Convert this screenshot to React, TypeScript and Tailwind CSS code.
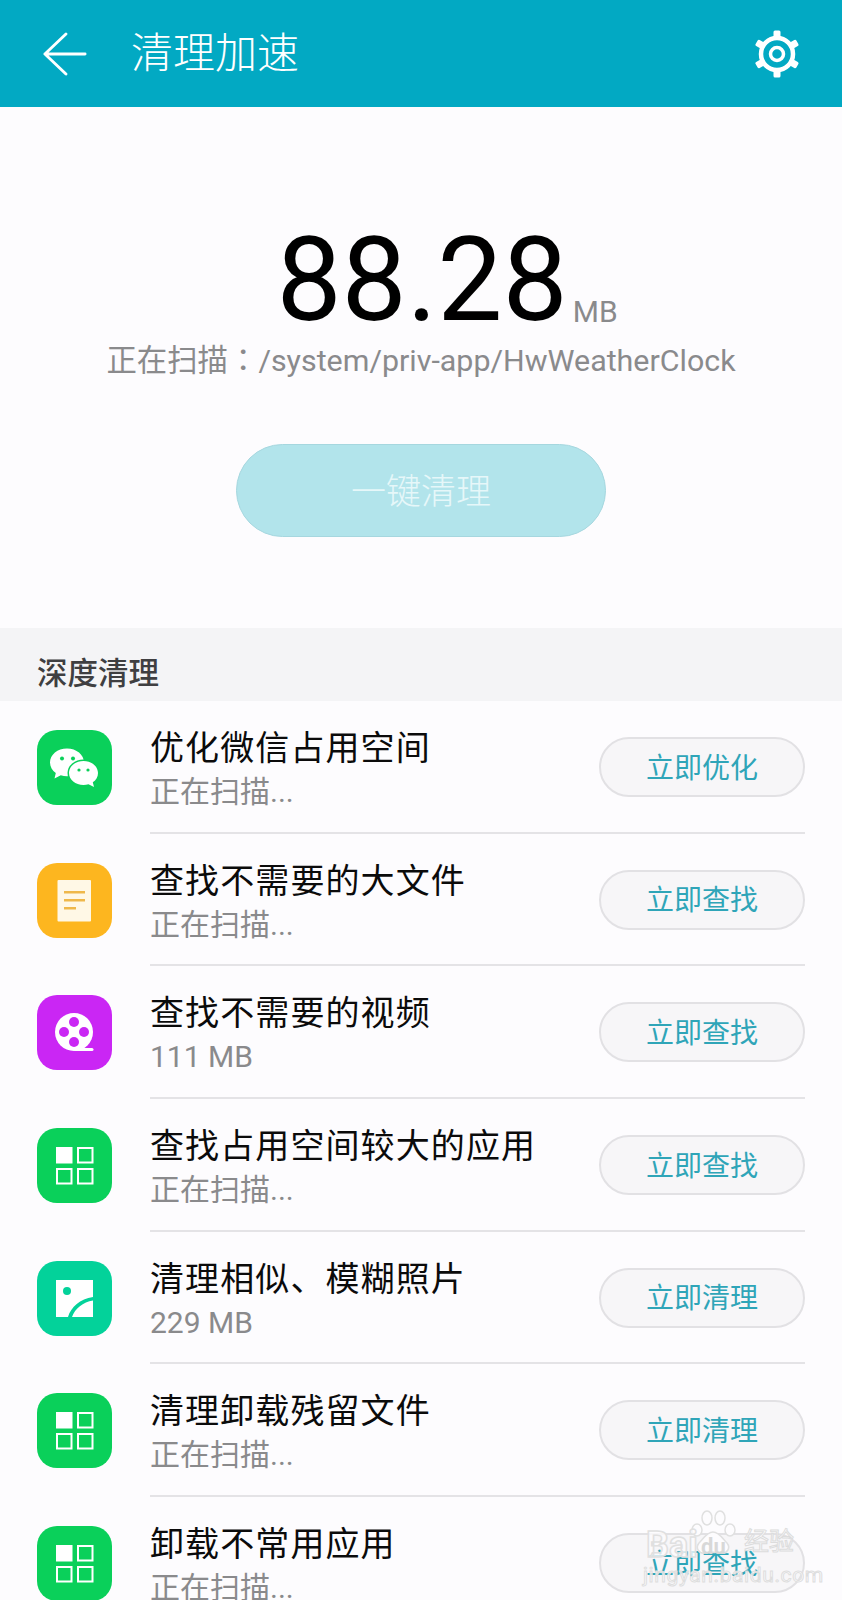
import React from 'react';

const ROWS = [
  { title: '优化微信占用空间', sub: '正在扫描...', action: '立即优化', icon: 'wechat' },
  { title: '查找不需要的大文件', sub: '正在扫描...', action: '立即查找', icon: 'file' },
  { title: '查找不需要的视频', sub: '111 MB', action: '立即查找', icon: 'video' },
  { title: '查找占用空间较大的应用', sub: '正在扫描...', action: '立即查找', icon: 'apps' },
  { title: '清理相似、模糊照片', sub: '229 MB', action: '立即清理', icon: 'photo' },
  { title: '清理卸载残留文件', sub: '正在扫描...', action: '立即清理', icon: 'apps' },
  { title: '卸载不常用应用', sub: '正在扫描...', action: '立即查找', icon: 'apps' },
];

const WechatIcon = () => (
  <svg viewBox="0 0 75 75" className="h-full w-full">
    <path d="M30 18.500c-9.500 0-17 6.200-17 14 0 4.300 2.300 8 5.800 10.500l-1.300 5.500 6.300-3.200c2 .6 4 .9 6.200.9 9.500 0 17-6 17-13.700s-7.500-14-17-14z" fill="#fff" />
    <ellipse cx="46.500" cy="43" rx="16" ry="13.500" fill="#0ad05a" />
    <path d="M46.500 31c-8 0-14.500 5.300-14.500 12s6.500 12 14.500 12c1.700 0 3.400-.2 5-.7l5.500 2.700-1.200-4.700c3.400-2.200 5.200-5.600 5.200-9.300 0-6.700-6.500-12-14.500-12z" fill="#fff" />
    <circle cx="25" cy="28.500" r="2" fill="#0ad05a" />
    <circle cx="36" cy="28.500" r="2" fill="#0ad05a" />
    <circle cx="42" cy="40" r="1.600" fill="#0ad05a" />
    <circle cx="51" cy="40" r="1.600" fill="#0ad05a" />
  </svg>
);

const FileIcon = () => (
  <svg viewBox="0 0 75 75" className="h-full w-full">
    <rect x="20.500" y="17" width="33.500" height="41.500" rx="1" fill="#fff8e6" />
    <rect x="27" y="28" width="21" height="2.500" fill="#efb84a" />
    <rect x="27" y="36" width="21" height="2.500" fill="#efb84a" />
    <rect x="27" y="44" width="12" height="2.500" fill="#efb84a" />
  </svg>
);

const VideoIcon = () => (
  <svg viewBox="0 0 75 75" className="h-full w-full">
    <circle cx="37" cy="37" r="19" fill="#fff" />
    <rect x="37" y="53" width="19.500" height="3" rx="1.500" fill="#fff" />
    <circle cx="37" cy="27" r="5" fill="#ca26f4" />
    <circle cx="37" cy="47" r="5" fill="#ca26f4" />
    <circle cx="27" cy="37" r="5" fill="#ca26f4" />
    <circle cx="47" cy="37" r="5" fill="#ca26f4" />
  </svg>
);

const AppsIcon = () => (
  <svg viewBox="0 0 75 75" className="h-full w-full">
    <rect x="19" y="19" width="16.500" height="16.500" fill="#fff" />
    <rect x="41" y="20" width="14.500" height="14.500" fill="none" stroke="#fff" strokeWidth="2" />
    <rect x="20" y="41" width="14.500" height="14.500" fill="none" stroke="#fff" strokeWidth="2" />
    <rect x="41" y="41" width="14.500" height="14.500" fill="none" stroke="#fff" strokeWidth="2" />
  </svg>
);

const PhotoIcon = () => (
  <svg viewBox="0 0 75 75" className="h-full w-full">
    <rect x="19" y="19" width="37" height="37" fill="#fff" />
    <circle cx="30" cy="30" r="4" fill="#03d29a" />
    <path d="M31 56c3-10 12-18 25-20v3.500c-10 1.500-18 8-21 16.500z" fill="#03d29a" />
  </svg>
);

const ICONS: Record<string, { bg: string; el: React.ReactNode }> = {
  wechat: { bg: 'bg-[#0ad05a]', el: <WechatIcon /> },
  file: { bg: 'bg-[#fdb61f]', el: <FileIcon /> },
  video: { bg: 'bg-[#ca26f4]', el: <VideoIcon /> },
  apps: { bg: 'bg-[#0ad05a]', el: <AppsIcon /> },
  photo: { bg: 'bg-[#03d29a]', el: <PhotoIcon /> },
};

const GearIcon = () => (
  <svg viewBox="0 0 48 48" className="h-[48px] w-[48px]" fill="none" stroke="#fff">
    <circle cx="24" cy="24" r="6.500" strokeWidth="3.500" />
    <circle cx="24" cy="24" r="16" strokeWidth="4.500" />
    <g fill="#fff" stroke="none">
      <rect x="20.500" y="0.500" width="7" height="7" rx="1.500" />
      <rect x="20.500" y="40.500" width="7" height="7" rx="1.500" />
      <rect x="20.500" y="0.500" width="7" height="7" rx="1.500" transform="rotate(60 24 24)" />
      <rect x="20.500" y="0.500" width="7" height="7" rx="1.500" transform="rotate(120 24 24)" />
      <rect x="20.500" y="0.500" width="7" height="7" rx="1.500" transform="rotate(240 24 24)" />
      <rect x="20.500" y="0.500" width="7" height="7" rx="1.500" transform="rotate(300 24 24)" />
    </g>
  </svg>
);

const Row = ({ row, last }: { row: (typeof ROWS)[number]; last: boolean }) => (
  <div className="flex h-[132.7px] shrink-0 items-start pl-[37px] pr-[37px]">
    <div className={`mt-[29px] h-[75px] w-[75px] shrink-0 overflow-hidden rounded-[20px] ${ICONS[row.icon].bg}`}>
      {ICONS[row.icon].el}
    </div>
    <div className={`ml-[38px] flex h-full flex-1 items-start ${last ? '' : 'border-b-2 border-[#e4e3e6]'}`}>
      <div className="flex-1 pt-[24px]">
        <div className="text-[34px] leading-[46px] tracking-[1.1px] text-[#0b0b0b]">{row.title}</div>
        <div className="pt-[2px] text-[30px] leading-[38px] text-[#8a8a8c]">{row.sub}</div>
      </div>
      <button className="mt-[36px] h-[60px] w-[206px] rounded-full border-2 border-[#e2e1e4] bg-[#f7f6f8] pt-[3px] text-[28px] text-[#2fa5b8]">
        {row.action}
      </button>
    </div>
  </div>
);

const Watermark = () => (
  <div className="absolute left-[643px] top-[1505px] h-[95px] w-[199px]">
    <svg viewBox="0 0 60 50" className="absolute left-[40px] top-[3px] h-[50px] w-[60px]" fill="#fdfcfe" stroke="#e0e0e0" strokeWidth="1.500">
      <ellipse cx="14" cy="22" rx="5" ry="6" />
      <ellipse cx="24" cy="10" rx="5" ry="7" />
      <ellipse cx="37" cy="10" rx="5" ry="7" />
      <ellipse cx="47" cy="22" rx="5" ry="6" />
      <path d="M30 24c-6 0-10 7-14 11-4 5 0 11 6 10 5-1 11-1 16 0 6 1 10-5 6-10-4-4-8-11-14-11z" />
    </svg>
    <div className="absolute left-[3px] top-[20px] text-[36px] font-bold leading-[40px] text-[#fdfcfe]/80 [-webkit-text-stroke:1.5px_#e0e0e0]">Bai</div>
    <div className="absolute left-[58px] top-[30px] text-[22px] font-bold leading-[24px] text-[#d8d8d8]">du</div>
    <div className="absolute left-[101px] top-[22px] text-[25px] leading-[30px] text-[#fdfcfe]/80 [-webkit-text-stroke:1px_#dcdcdc]">经验</div>
    <div className="absolute left-0 top-[58px] whitespace-nowrap text-[21px] leading-[24px] tracking-[0.6px] text-[#fdfcfe]/80 [-webkit-text-stroke:1px_#dedede]">jingyan.baidu.com</div>
  </div>
);

export default function App() {
  return (
    <div className="relative flex h-[1600px] w-[842px] flex-col overflow-hidden bg-[#fdfcfe] font-['Roboto','Noto_Sans_CJK_SC',sans-serif]">
      <header className="flex h-[107px] shrink-0 items-center bg-[#02a9c3] pl-[43px] pr-[41px] text-white">
        <svg viewBox="0 0 46 46" className="h-[44px] w-[44px]" fill="none" stroke="#fff" strokeWidth="3" strokeLinecap="round" strokeLinejoin="round">
          <path d="M24 2 2 23l22 21M2 23h42" />
        </svg>
        <h1 className="ml-[44px] flex-1 text-[42px] font-light leading-none">清理加速</h1>
        <GearIcon />
      </header>

      <section className="flex h-[521px] shrink-0 flex-col items-center">
        <div className="mt-[113px] flex h-[120px] items-end pl-[52px]">
          <span className="text-[116px] font-normal leading-[120px] text-black">88.28</span>
          <span className="mb-[12px] ml-[5px] text-[30px] leading-[32px] text-[#8a8a8c]">MB</span>
        </div>
        <p className="mt-[-2px] text-[30.4px] leading-[40px] text-[#8a8a8c]">
          正在扫描<span className="font-['Noto_Sans_CJK_TC',sans-serif]">：</span>/system/priv-app/HwWeatherClock
        </p>
        <button className="mt-[63px] h-[93px] w-[370px] rounded-full border border-[#a6d7df] bg-[#b2e4eb] pt-[6px] text-[35px] font-light text-[#e6f7f9]">
          一键清理
        </button>
      </section>

      <div className="flex h-[73px] shrink-0 items-end bg-[#f4f4f6] pb-[7px] pl-[37px] text-[30.5px] font-medium leading-[40px] text-[#3f3f41]">
        深度清理
      </div>

      <div className="flex flex-col">
        {ROWS.map((row, i) => (
          <Row key={i} row={row} last={i === ROWS.length - 1} />
        ))}
      </div>
      <Watermark />
    </div>
  );
}
